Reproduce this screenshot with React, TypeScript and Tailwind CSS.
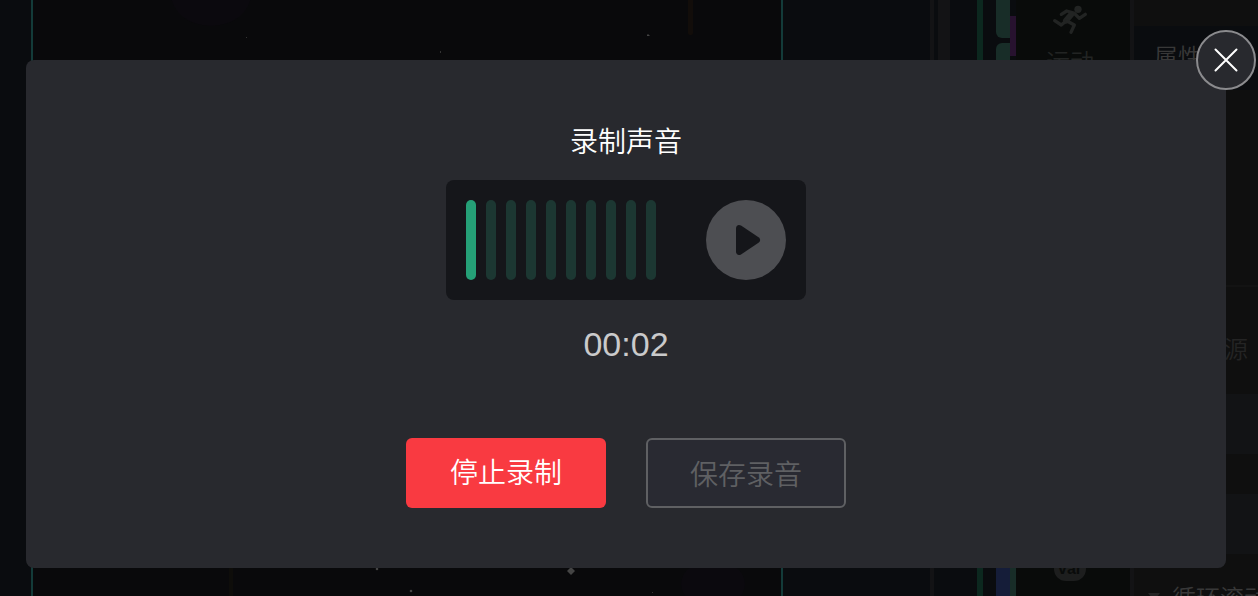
const BARS = Array.from({ length: 10 }, (_, i) => i);

function RunnerIcon() {
  return (
    <svg viewBox="456 15 108 90" className="h-[30px] w-9" fill="none" stroke="#222423" strokeWidth="10" strokeLinecap="round" strokeLinejoin="round" aria-hidden="true">
      <circle cx="534" cy="28" r="11" fill="#222423" stroke="none" />
      <path d="M484 43 500 33 522 39 538 55 556 43" />
      <path d="M514 43 498 62" strokeWidth="18" />
      <path d="M497 64 484 75 464 62" />
      <path d="M501 63 523 75 513 97" />
    </svg>
  );
}

function Stage() {
  return (
    <div className="relative flex-1 overflow-hidden border-x-2 border-[#133b39] bg-[#09090b]">
      <svg className="absolute inset-0 h-full w-full" aria-hidden="true">
        <ellipse cx="178" cy="-6" rx="40" ry="32" fill="#0b090e" />
        <rect x="655" y="-10" width="5" height="45" rx="2" fill="#120d0a" />
        <rect x="196" y="568" width="4" height="28" fill="#0e0d0a" />
        <ellipse cx="680" cy="584" rx="32" ry="24" fill="#0b090e" />
        <path d="m538 567 4 4-4 4-4-4z" fill="#444" />
        <path d="M614 36v-1l1-1 1 1 1 1z" fill="#444" />
        <circle cx="344" cy="569" r="1.3" fill="#444" />
        <circle cx="378" cy="591" r="1.3" fill="#444" />
        <rect x="407" y="51" width="1" height="2" fill="#333" />
        <rect x="213" y="37" width="1" height="1" fill="#333" />
        <rect x="619" y="592" width="1" height="1" fill="#333" />
      </svg>
    </div>
  );
}

function BlockPalette() {
  return (
    <div className="flex">
      <div className="w-1 bg-[#131315]" />
      <div className="flex w-[43px] flex-col">
        <div className="ml-1 h-[300px] w-3 bg-[#131315]" />
      </div>
      <div className="w-1.5 bg-[#0c281f]" />
      <div className="flex w-[33px] flex-col pl-[13px]">
        <div className="flex h-[300px]">
          <div className="flex w-3.5 flex-col gap-[5px]">
            <div className="h-[38px] rounded-bl-md bg-[#182d28]" />
            <div className="flex-1 rounded-tl-md bg-[#182d28]" />
          </div>
          <div className="mt-4 h-10 w-1.5 bg-[#27122f]" />
        </div>
        <div className="flex flex-1">
          <div className="w-3.5 bg-[#151d39]" />
          <div className="w-1.5 bg-[#182d28]" />
        </div>
      </div>
    </div>
  );
}

function CategoryRail() {
  return (
    <div className="flex w-[114px] flex-col items-center justify-between bg-[#090b0a] pt-[5px] pr-1.5 pb-[15px] text-2xl text-[#222423]">
      <div className="flex flex-col items-center gap-2.5">
        <RunnerIcon />
        <span>运动</span>
      </div>
      <span className="rounded-full bg-[#1d1e1e] px-1 font-['Liberation_Sans',sans-serif] text-base leading-6 font-bold text-[#090b0a]">var</span>
    </div>
  );
}

function PropertyPanel() {
  return (
    <div className="flex w-32 flex-col overflow-hidden border-l-4 border-[#131315] bg-[#0f0f0f] text-2xl whitespace-nowrap text-[#242424] *:shrink-0">
      <div className="mt-[26px] h-16 bg-[#0a0c0f] px-5 leading-[60px] text-[#383838]">属性</div>
      <div className="mt-[195px] h-[2px] bg-[#131313]" />
      <div className="mt-[45px] h-[62px] pr-2.5 text-right leading-8">资源</div>
      <div className="h-[60px] bg-[#121315]" />
      <div className="mt-10 h-[60px] bg-[#121315]" />
      <div className="mt-[22px] flex items-center gap-3 pl-3.5 leading-[42px] text-[#383838]">
        <svg viewBox="0 0 12 8" className="h-2 w-3 shrink-0" fill="#242424" aria-hidden="true">
          <path d="M0 0h12L6 8z" />
        </svg>
        <span>循环滚动</span>
      </div>
    </div>
  );
}

function RecordDialog() {
  return (
    <section role="dialog" aria-modal="true" aria-labelledby="record-title" className="relative flex flex-col items-center rounded-lg bg-[#28292e] px-6 py-15">
      <button type="button" aria-label="关闭" className="absolute -top-[30px] -right-[30px] flex size-15 items-center justify-center rounded-full border-2 border-[#8b8b8e] bg-[#28292e]">
        <svg viewBox="0 0 24 24" className="size-6" fill="none" stroke="#fff" strokeWidth="2" strokeLinecap="round" aria-hidden="true">
          <path d="m1.500 1.500 21 21M22.500 1.500l-21 21" />
        </svg>
      </button>
      <h1 id="record-title" className="text-[28px] leading-10 text-white">录制声音</h1>
      <div className="mt-5 flex w-[360px] justify-between rounded-lg bg-[#15161a] p-5">
        <div className="flex gap-2.5">
          {BARS.map((i) => (
            <div key={i} className={i === 0 ? "h-20 w-2.5 rounded-full bg-[#25a077]" : "h-20 w-2.5 rounded-full bg-[#1c3732]"} />
          ))}
        </div>
        <button type="button" aria-label="播放" className="flex size-20 items-center justify-center rounded-full bg-[#4d4e52]">
          <svg viewBox="0 0 80 80" className="size-20" fill="#15161a" aria-hidden="true">
            <path d="M30 28.500c0-3 2.500-4.500 5-2.900l17.500 11.600c2.200 1.500 2.200 4.100 0 5.600L35 54.400c-2.500 1.600-5 .1-5-2.900z" />
          </svg>
        </button>
      </div>
      <time className="mt-6 font-['Liberation_Sans',sans-serif] text-[34px] leading-10 text-[#cacacb]">00:02</time>
      <div className="mt-[74px] flex gap-10">
        <button type="button" className="h-[70px] w-50 rounded-md bg-[#f93a41] pb-1 text-[28px] text-white">停止录制</button>
        <button type="button" disabled className="h-[70px] w-50 rounded-md border-2 border-[#5f6063] bg-[#292a32] text-[28px] text-[#5f6063]">保存录音</button>
      </div>
    </section>
  );
}

export default function App() {
  return (
    <div className="relative min-h-screen overflow-hidden bg-[#0a0c0f] font-['Noto_Sans_CJK_SC',sans-serif] font-[350]">
      <div className="absolute inset-0 flex" aria-hidden="true">
        <div className="w-[31px]" />
        <Stage />
        <div className="w-[147px]" />
        <BlockPalette />
        <CategoryRail />
        <PropertyPanel />
      </div>
      <main className="relative pt-15 pr-8 pb-7 pl-[26px]">
        <RecordDialog />
      </main>
    </div>
  );
}
